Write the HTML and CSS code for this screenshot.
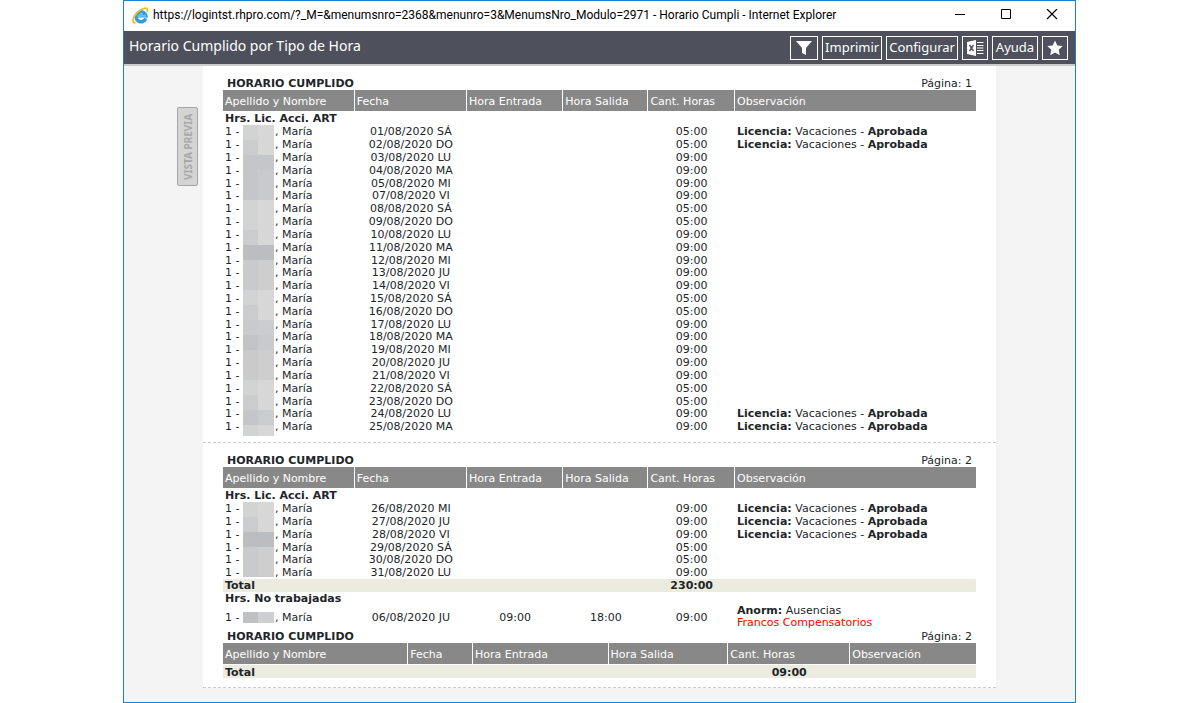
FILE: index.html
```html
<!DOCTYPE html>
<html lang="es">
<head>
    <meta charset="UTF-8">
    <meta name="viewport" content="width=device-width, initial-scale=1.0">
    <title>Horario Cumplido por Tipo de Hora</title>
    <link rel="stylesheet" href="styles.css">
</head>
<body>
    <div class="window">
        <div class="titlebar">
            <svg class="ie-icon" width="17" height="17" viewBox="0 0 17 17" aria-hidden="true">
                <path d="M13.8 11.4A5 5 0 1 1 14 8.9H5.5" fill="none" stroke="#2f9fe0" stroke-width="3.4"/>
                <path d="M5.5 8.9H14" fill="none" stroke="#6cc8f2" stroke-width="1.6"/>
                <path d="M3.6 15.6C-.4 16.6.4 10.6 4.4 6.4 8.4 2.2 14.4-.4 15.4 2.2c.3.8.1 1.7-.3 2.6" fill="none" stroke="#f0bd24" stroke-width="1.8"/>
            </svg>
            <span class="titlebar-text">https://logintst.rhpro.com/?_M=&amp;menumsnro=2368&amp;menunro=3&amp;MenumsNro_Modulo=2971 - Horario Cumpli - Internet Explorer</span>
            <div class="window-controls">
                <button type="button" aria-label="Minimizar"><svg width="12" height="12" viewBox="0 0 12 12"><path d="M1 5.5h10" fill="none" stroke="#000"/></svg></button>
                <button type="button" aria-label="Maximizar"><svg width="12" height="12" viewBox="0 0 12 12"><path d="M1.5.5h9v9h-9z" fill="none" stroke="#000"/></svg></button>
                <button type="button" aria-label="Cerrar"><svg width="12" height="12" viewBox="0 0 12 12"><path d="M1 0l10 10M11 0L1 10" fill="none" stroke="#000" stroke-width="1.2"/></svg></button>
            </div>
        </div>

        <div class="toolbar">
            <h1>Horario Cumplido por Tipo de Hora</h1>
            <div class="actions">
                <button type="button" class="icon wide" aria-label="Filtro"><svg width="16" height="16" viewBox="0 0 16 16"><path d="M0 1h16l-6 7v7l-4-2V8z" fill="#fff"/></svg></button>
                <button type="button">Imprimir</button>
                <button type="button">Configurar</button>
                <button type="button" class="icon" aria-label="Excel">
                    <svg width="17" height="16" viewBox="0 0 17 16">
                        <path d="M0 2l9-2v16l-9-2z" fill="#fff"/>
                        <path d="M10 2.5h6.5M10 5.5h6.5M10 8h6.5M10 10.5h6.5M10 13.5h6.5" fill="none" stroke="#fff" stroke-width="1.2"/>
                        <path d="M2.5 5l4 6M6.5 5l-4 6" stroke="#4e515c" stroke-width="1.4"/>
                    </svg>
                </button>
                <button type="button">Ayuda</button>
                <button type="button" class="icon" aria-label="Favoritos"><svg width="16" height="16" viewBox="0 0 16 16"><path d="M8 .5l2.3 5 5.4.6-4 3.7 1.1 5.4L8 12.5l-4.8 2.7 1.1-5.4-4-3.7 5.4-.6z" fill="#fff"/></svg></button>
            </div>
        </div>

        <div class="content">
            <div class="side">
                <button type="button" class="preview" disabled>VISTA PREVIA</button>
            </div>

            <div class="sheets">
                <section class="sheet">
                    <div class="sheet-head"><h2>HORARIO CUMPLIDO</h2><span>Página: 1</span></div>
                    <div class="report">
                        <table class="hours first">
                            <thead>
                                <tr><th class="name">Apellido y Nombre</th><th class="date">Fecha</th><th class="in">Hora Entrada</th><th class="out">Hora Salida</th><th class="qty">Cant. Horas</th><th>Observación</th></tr>
                            </thead>
                            <tbody>
                                <tr class="group"><td colspan="6">Hrs. Lic. Acci. ART</td></tr>
                                <tr><td>1 - <i></i>, María</td><td>01/08/2020 SÁ</td><td></td><td></td><td>05:00</td><td><b>Licencia:</b> Vacaciones - <b>Aprobada</b></td></tr>
                                <tr><td>1 - <i></i>, María</td><td>02/08/2020 DO</td><td></td><td></td><td>05:00</td><td><b>Licencia:</b> Vacaciones - <b>Aprobada</b></td></tr>
                                <tr><td>1 - <i></i>, María</td><td>03/08/2020 LU</td><td></td><td></td><td>09:00</td><td></td></tr>
                                <tr><td>1 - <i></i>, María</td><td>04/08/2020 MA</td><td></td><td></td><td>09:00</td><td></td></tr>
                                <tr><td>1 - <i></i>, María</td><td>05/08/2020 MI</td><td></td><td></td><td>09:00</td><td></td></tr>
                                <tr><td>1 - <i></i>, María</td><td>07/08/2020 VI</td><td></td><td></td><td>09:00</td><td></td></tr>
                                <tr><td>1 - <i></i>, María</td><td>08/08/2020 SÁ</td><td></td><td></td><td>05:00</td><td></td></tr>
                                <tr><td>1 - <i></i>, María</td><td>09/08/2020 DO</td><td></td><td></td><td>05:00</td><td></td></tr>
                                <tr><td>1 - <i></i>, María</td><td>10/08/2020 LU</td><td></td><td></td><td>09:00</td><td></td></tr>
                                <tr><td>1 - <i></i>, María</td><td>11/08/2020 MA</td><td></td><td></td><td>09:00</td><td></td></tr>
                                <tr><td>1 - <i></i>, María</td><td>12/08/2020 MI</td><td></td><td></td><td>09:00</td><td></td></tr>
                                <tr><td>1 - <i></i>, María</td><td>13/08/2020 JU</td><td></td><td></td><td>09:00</td><td></td></tr>
                                <tr><td>1 - <i></i>, María</td><td>14/08/2020 VI</td><td></td><td></td><td>09:00</td><td></td></tr>
                                <tr><td>1 - <i></i>, María</td><td>15/08/2020 SÁ</td><td></td><td></td><td>05:00</td><td></td></tr>
                                <tr><td>1 - <i></i>, María</td><td>16/08/2020 DO</td><td></td><td></td><td>05:00</td><td></td></tr>
                                <tr><td>1 - <i></i>, María</td><td>17/08/2020 LU</td><td></td><td></td><td>09:00</td><td></td></tr>
                                <tr><td>1 - <i></i>, María</td><td>18/08/2020 MA</td><td></td><td></td><td>09:00</td><td></td></tr>
                                <tr><td>1 - <i></i>, María</td><td>19/08/2020 MI</td><td></td><td></td><td>09:00</td><td></td></tr>
                                <tr><td>1 - <i></i>, María</td><td>20/08/2020 JU</td><td></td><td></td><td>09:00</td><td></td></tr>
                                <tr><td>1 - <i></i>, María</td><td>21/08/2020 VI</td><td></td><td></td><td>09:00</td><td></td></tr>
                                <tr><td>1 - <i></i>, María</td><td>22/08/2020 SÁ</td><td></td><td></td><td>05:00</td><td></td></tr>
                                <tr><td>1 - <i></i>, María</td><td>23/08/2020 DO</td><td></td><td></td><td>05:00</td><td></td></tr>
                                <tr><td>1 - <i></i>, María</td><td>24/08/2020 LU</td><td></td><td></td><td>09:00</td><td><b>Licencia:</b> Vacaciones - <b>Aprobada</b></td></tr>
                                <tr><td>1 - <i></i>, María</td><td>25/08/2020 MA</td><td></td><td></td><td>09:00</td><td><b>Licencia:</b> Vacaciones - <b>Aprobada</b></td></tr>
                            </tbody>
                        </table>
                        <!-- mosaic over the surnames -->
                        <svg class="mosaic" width="31" height="311" viewBox="0 0 31 311" aria-hidden="true">
                            <path fill="#d7d7d7" d="M0 0h31v311H0z"/>
                            <path fill="#d2d4d3" d="M0 0h15v15H0zM0 75h15v30H0zM0 165h15v15H0zM0 255h15v15H0zM0 300h15v11H0z"/>
                            <path fill="#cacccd" d="M0 15h15v15H0zM0 105h15v15H0zM0 180h15v15H0zM0 270h15v15H0zM15 195h16v15H15zM15 285h16v15H15z"/>
                            <path fill="#c5c6c9" d="M0 30h31v15H0zM0 45h15v30H0zM0 285h15v15H0z"/>
                            <path fill="#c9cacd" d="M15 45h16v30H15zM0 135h15v30H0zM0 195h15v15H0zM15 210h16v15H15z"/>
                            <path fill="#bcbdc0" d="M0 120h31v15H0z"/>
                            <path fill="#cecece" d="M15 135h16v30H15zM15 225h16v30H15z"/>
                            <path fill="#c1c3c6" d="M0 210h15v15H0z"/>
                            <path fill="#cacaca" d="M0 225h15v30H0z"/>
                        </svg>
                    </div>
                </section>

                <section class="sheet">
                    <div class="sheet-head"><h2>HORARIO CUMPLIDO</h2><span>Página: 2</span></div>
                    <div class="report">
                        <table class="hours second">
                            <thead>
                                <tr><th class="name">Apellido y Nombre</th><th class="date">Fecha</th><th class="in">Hora Entrada</th><th class="out">Hora Salida</th><th class="qty">Cant. Horas</th><th>Observación</th></tr>
                            </thead>
                            <tbody>
                                <tr class="group"><td colspan="6">Hrs. Lic. Acci. ART</td></tr>
                                <tr><td>1 - <i></i>, María</td><td>26/08/2020 MI</td><td></td><td></td><td>09:00</td><td><b>Licencia:</b> Vacaciones - <b>Aprobada</b></td></tr>
                                <tr><td>1 - <i></i>, María</td><td>27/08/2020 JU</td><td></td><td></td><td>09:00</td><td><b>Licencia:</b> Vacaciones - <b>Aprobada</b></td></tr>
                                <tr><td>1 - <i></i>, María</td><td>28/08/2020 VI</td><td></td><td></td><td>09:00</td><td><b>Licencia:</b> Vacaciones - <b>Aprobada</b></td></tr>
                                <tr><td>1 - <i></i>, María</td><td>29/08/2020 SÁ</td><td></td><td></td><td>05:00</td><td></td></tr>
                                <tr><td>1 - <i></i>, María</td><td>30/08/2020 DO</td><td></td><td></td><td>05:00</td><td></td></tr>
                                <tr><td>1 - <i></i>, María</td><td>31/08/2020 LU</td><td></td><td></td><td>09:00</td><td></td></tr>
                                <tr class="total"><td>Total</td><td></td><td></td><td></td><td>230:00</td><td></td></tr>
                                <tr class="group"><td colspan="6">Hrs. No trabajadas</td></tr>
                                <tr><td>1 - <i class="masked"></i>, María</td><td>06/08/2020 JU</td><td>09:00</td><td>18:00</td><td>09:00</td><td class="detail"><b>Anorm:</b> Ausencias<br><span class="alert">Francos Compensatorios</span></td></tr>
                            </tbody>
                        </table>
                        <svg class="mosaic" width="31" height="75" viewBox="0 0 31 75" aria-hidden="true">
                            <path fill="#d7d7d7" d="M0 0h31v75H0z"/>
                            <path fill="#d2d4d3" d="M0 0h15v15H0z"/>
                            <path fill="#cacccd" d="M0 15h15v15H0z"/>
                            <path fill="#bcbdc0" d="M0 30h31v15H0z"/>
                            <path fill="#c9cacd" d="M0 45h15v30H0z"/>
                            <path fill="#cecece" d="M15 45h16v30H15z"/>
                        </svg>
                    </div>

                    <div class="sheet-head"><h2>HORARIO CUMPLIDO</h2><span>Página: 2</span></div>
                    <table class="hours summary">
                        <thead>
                            <tr><th class="name">Apellido y Nombre</th><th class="date">Fecha</th><th class="in">Hora Entrada</th><th class="out">Hora Salida</th><th class="qty">Cant. Horas</th><th>Observación</th></tr>
                        </thead>
                        <tbody>
                            <tr class="total"><td>Total</td><td></td><td></td><td></td><td>09:00</td><td></td></tr>
                        </tbody>
                    </table>
                </section>
            </div>
        </div>
    </div>
</body>
</html>
```
FILE: styles.css
```css
* {
    box-sizing: border-box;
}
body {
    margin: 0 124px 0 123px;
    font-family: "DejaVu Sans", Verdana, sans-serif;
    font-size: 11px;
    color: #212529;
    background: #fff;
}
button {
    padding: 0;
    border: none;
    background: none;
    font-family: inherit;
}
svg {
    display: block;
}
.window {
    display: flex;
    flex-direction: column;
    min-height: 100vh;
    border: 1px solid #1b80d0;
    background: #f4f4f4;
}

/* browser title bar */
.titlebar {
    display: flex;
    align-items: center;
    height: 30px;
    padding: 0 0 2px 8px;
    background: #fff;
    color: #000;
}
.titlebar-text {
    margin-left: 4px;
    font: 12px Roboto, "Segoe UI", sans-serif;
    white-space: nowrap;
}
.window-controls {
    display: flex;
    margin-left: auto;
}
.window-controls button {
    display: flex;
    align-items: center;
    justify-content: center;
    width: 46px;
    height: 28px;
}

/* toolbar */
.toolbar {
    display: flex;
    align-items: center;
    justify-content: space-between;
    height: 35px;
    padding: 0 7px 0 5px;
    background: #4e515c;
    border-bottom: 2px solid #ccc;
    color: #fff;
    font-family: "Noto Sans", Tahoma, sans-serif;
}
.toolbar h1 {
    margin: 0;
    padding-bottom: 4px;
    font-size: 14px;
    font-weight: normal;
}
.actions {
    display: flex;
    gap: 4px;
}
.actions button {
    display: flex;
    align-items: center;
    justify-content: center;
    min-width: 46px;
    height: 24px;
    padding: 0 2px 2px;
    border: 1px solid #fff;
    color: #fff;
    font-size: 13px;
}
.actions .icon {
    min-width: 26px;
    padding: 0;
}
.actions .wide {
    min-width: 28px;
}

/* content */
.content {
    display: flex;
    flex: 1;
    padding-right: 79px;
}
.side {
    flex: 0 0 79px;
    display: flex;
    align-items: flex-start;
    justify-content: flex-end;
    padding: 41px 5px 0 0;
}
.preview {
    width: 21px;
    height: 79px;
    border: 1px solid #a6a6a6;
    border-radius: 2px;
    background: #d4d4d4;
    color: #a8a8a8;
    font: bold 10px "Noto Sans", Tahoma, sans-serif;
    writing-mode: vertical-rl;
    transform: rotate(180deg);
}
.sheets {
    flex: 1;
}
.sheet {
    padding: 11px 20px 9px;
    border-bottom: 1px dashed #ccc;
    background: #fff;
}
.sheet-head {
    display: flex;
    justify-content: space-between;
    padding: 0 4px;
    line-height: 13px;
}
.sheet-head h2 {
    margin: 0;
    font-size: 11px;
}
.report {
    position: relative;
}
.hours {
    width: 100%;
    table-layout: fixed;
    border-collapse: separate;
    border-spacing: 0;
    line-height: 11px;
}
.first {
    min-height: 343px;
}
.second {
    min-height: 163px;
}
.hours th {
    height: 22px;
    padding: 1px 0 0 2px;
    border-right: 1px solid #fff;
    border-bottom: 1px solid #fff;
    background: #888;
    color: #fff;
    font-weight: normal;
    text-align: left;
}
.hours th:last-child {
    border-right: none;
}
.name { width: 17.5%; }
.date { width: 14.9%; }
.in { width: 12.8%; }
.out { width: 11.3%; }
.qty { width: 11.5%; }
.summary .name { width: 24.6%; }
.summary .date { width: 8.6%; }
.summary .in { width: 18%; }
.summary .out { width: 15.9%; }
.summary .qty { width: 16.2%; }
.hours td {
    padding: 1px 0 0;
    text-align: center;
    white-space: nowrap;
}
.hours td:first-child,
.hours td:last-child {
    padding-left: 2px;
    text-align: left;
}
.hours .detail {
    padding-top: 0;
    line-height: 12px;
}
.group td,
.total td {
    font-weight: bold;
}
.total td {
    background: #ebebdf;
}
.summary td {
    height: 13px;
}
.alert {
    color: #f00;
}

/* hidden surnames */
.hours i {
    display: inline-block;
    width: 31px;
    height: 11px;
    margin-right: 1px;
    vertical-align: top;
}
.masked {
    background: linear-gradient(to right, #bfc0c2 50%, #cdcfd1 50%);
}
.mosaic {
    position: absolute;
    left: 20px;
    top: 35px;
}
```
